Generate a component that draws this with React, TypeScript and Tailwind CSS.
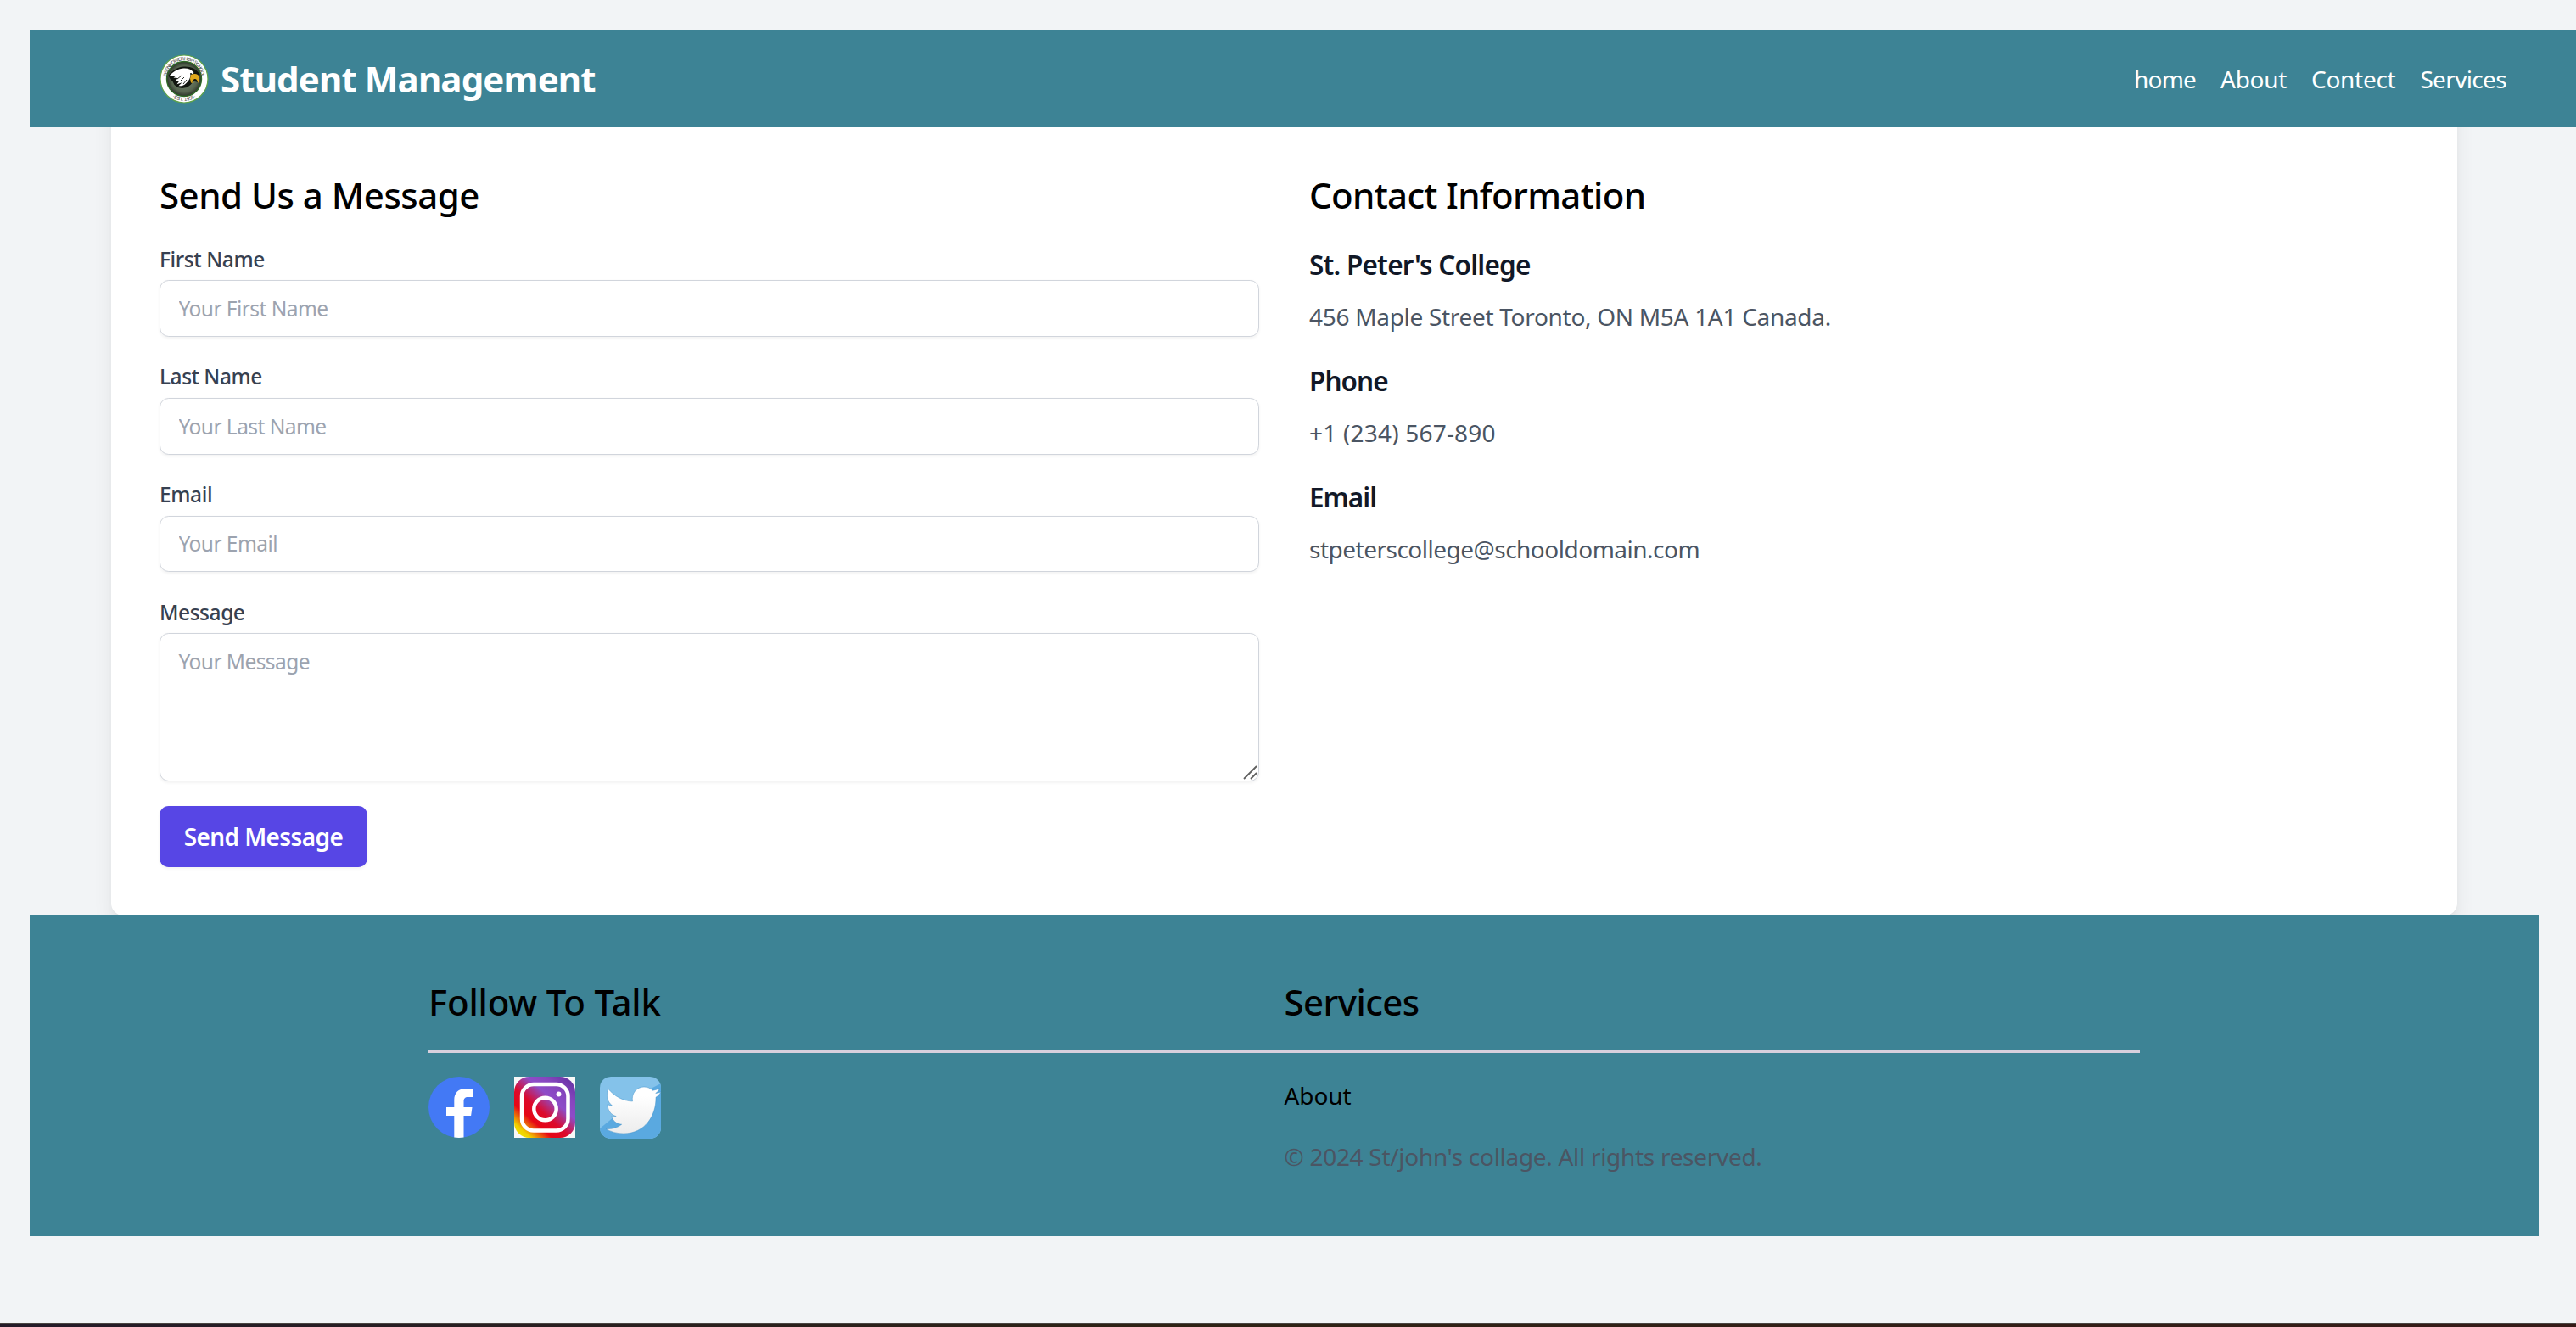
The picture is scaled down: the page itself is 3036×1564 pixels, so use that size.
const inputClass =
  "block h-[66.6px] w-full rounded-[10.8px] border border-gray-300 bg-white px-[21.5px] text-[24.5px] tracking-[-0.55px] text-gray-700 shadow-[0_1.8px_3.6px_rgba(0,0,0,0.05)] outline-none placeholder:text-[#9ca3af]";
const labelClass = "mb-[6.5px] block pt-[0.5px] text-[24.5px] leading-[36px] font-medium text-[#374151]";
const infoHeadingClass = "mb-[14px] text-[31.5px] leading-[50px] font-semibold text-[#111827]";

function EagleLogo() {
  return (
    <svg className="size-[58px] shrink-0" viewBox="0 0 58 58">
      <defs>
        <radialGradient id="crest">
          <stop offset="0.3" stopColor="#6f7f6a" />
          <stop offset="0.75" stopColor="#56654f" />
          <stop offset="1" stopColor="#2c332a" />
        </radialGradient>
        <path id="arcTop" d="M8.6 29a20.4 20.4 0 0 1 40.8 0" />
        <path id="arcBottom" d="M4.6 29a24.4 24.4 0 0 0 48.8 0" />
      </defs>
      <circle cx="29" cy="29" r="28" fill="#fff" stroke="#5fa348" strokeWidth="1.2" />
      <circle cx="29" cy="29" r="20.500" fill="url(#crest)" stroke="#2f6a27" strokeWidth="1.4" />
      <text fontFamily="Liberation Sans" fontSize="5.6" fill="#333" transform="translate(0 -1.6)">
        <textPath href="#arcTop" startOffset="50%" textAnchor="middle" textLength="62">EISENHOWER HIGH SCHOOL</textPath>
      </text>
      <text fontFamily="Liberation Sans" fontSize="5.6" fill="#333" transform="translate(0 1.6)">
        <textPath href="#arcBottom" startOffset="50%" textAnchor="middle">·EST. 1959·</textPath>
      </text>
      <path
        d="M10.500 25c4-6 11-10 18-10.500 8-.6 15 2.500 19 9L45 33l-4.500-1.500-4 4.500-4 3-6 1-5-1-4-3-2-4-3-3Z"
        fill="#11150f"
      />
      <path
        d="M11.500 25.500c5-6 11-8.500 17-9 5-.3 9.500 1.500 12 5.500l-4 2c0 4-2 7-5 10-3 3-6 3.500-9 3.300l4-4-6 2 3-4.300-5 1 3-4-5-.5 3-2.300Z"
        fill="#fff"
      />
      <path d="m21 29 5-4M24 32l5-5M28 35l4-5" stroke="#11150f" strokeWidth="0.900" />
      <path d="M37 24c4-2 9-1.500 10 3 .5 3-.6 5-2 7 0-3-1-5-4-5l-3 3 3 2-4-.5-1-5Z" fill="#e0a81c" />
      <circle cx="37" cy="23" r="1" fill="#11150f" />
    </svg>
  );
}

function Facebook() {
  return (
    <svg className="size-[72px]" viewBox="0 0 72 72">
      <circle cx="36" cy="36" r="36" fill="#4379f5" />
      <path
        d="M30.300 71.500V46H21V36h9.300v-8.500C30.300 19 35.500 14 43.500 14c3 0 6 .2 8.500.4V24h-5.500c-3.500 0-5 2-5 5v7h10l-1.400 10h-8.600v25.500a36 36 0 0 1-11.200 0Z"
        fill="#fff"
      />
    </svg>
  );
}

function Instagram() {
  return (
    <svg className="size-[72px]" viewBox="0 0 72 72">
      <defs>
        <linearGradient id="insta" x1="0.07" y1="0.95" x2="0.87" y2="0.04">
          <stop offset="0" stopColor="#f0e000" />
          <stop offset="0.08" stopColor="#f0d000" />
          <stop offset="0.27" stopColor="#e60614" />
          <stop offset="0.44" stopColor="#dc0a2c" />
          <stop offset="0.66" stopColor="#8e4cc8" />
          <stop offset="0.82" stopColor="#8646be" />
          <stop offset="1" stopColor="#6c36a8" />
        </linearGradient>
      </defs>
      <path fill="#f8f8f8" d="M0 0h72v72H0z" />
      <rect width="72" height="72" rx="18" fill="url(#insta)" />
      <rect x="9" y="9" width="54.500" height="54.500" rx="14" fill="none" stroke="#fff" strokeWidth="4.500" />
      <circle cx="36.500" cy="38" r="13.200" fill="none" stroke="#fff" strokeWidth="4.500" />
      <circle cx="52.500" cy="20.500" r="2.900" fill="#fff" />
    </svg>
  );
}

function Twitter() {
  return (
    <svg className="h-[73px] w-[72px]" viewBox="0 0 72 73">
      <defs>
        <clipPath id="tile">
          <rect width="72" height="73" rx="13" />
        </clipPath>
        <linearGradient id="bird" x1="0" y1="0" x2="0" y2="1">
          <stop offset="0.2" stopColor="#fff" />
          <stop offset="1" stopColor="#ececec" />
        </linearGradient>
      </defs>
      <g clipPath="url(#tile)">
        <path fill="#84c2ea" d="M0 0h72v73H0z" />
        <path fill="#5aa9e0" d="M72 8 54 17 0 61v12h72Z" />
        <path
          d="M10 14.500C17 23 27 28.500 38.500 29 37 20 43 12 52 12c4.500 0 7.500 1.600 10.500 4.300 3-.5 5.500-1.500 8-2.800-.8 2.500-2.500 4.500-4.800 6 2.200-.2 4.300-.8 6.300-1.600-1.500 2.600-3.500 4.700-6 6.300C66.500 46 53 67 28 67c-8 0-15-2-21-5.600 7 .6 13.500-1.200 18.700-5.200-6-.4-10.200-4-12-9.600h5.500C13 45 9.300 40 9 32.500c1.700 1 3.500 1.500 5.500 1.600C8.500 29.500 7 21.500 10 14.500Z"
          fill="url(#bird)"
          stroke="#3f8fc8"
          strokeOpacity="0.500"
          strokeWidth="0.900"
        />
      </g>
    </svg>
  );
}

function Header() {
  return (
    <header className="relative z-10 ml-[35px] flex h-[115px] items-center justify-between bg-[#3d8395] pr-[82px] pl-[153px] text-white">
      <div className="flex items-center">
        <EagleLogo />
        <span className="ml-[14px] text-[42px] font-bold tracking-[-0.86px]">Student Management</span>
      </div>
      <nav className="flex gap-[29px] text-[28px]">
        <a className="tracking-[-0.8px]">home</a>
        <a className="tracking-[-0.3px]">About</a>
        <a className="tracking-[-0.3px]">Contect</a>
        <a className="tracking-[-0.65px]">Services</a>
      </nav>
    </header>
  );
}

function MessageForm() {
  return (
    <section>
      <h2 className="mb-[28.4px] text-[42px] leading-[58px] font-medium tracking-[-0.5px] text-black">Send Us a Message</h2>
      <form className="flex flex-col gap-[29px]">
        <div>
          <label className={`${labelClass} tracking-[-0.4px]`}>First Name</label>
          <input className={inputClass} placeholder="Your First Name" />
        </div>
        <div>
          <label className={`${labelClass} tracking-[-0.48px]`}>Last Name</label>
          <input className={inputClass} placeholder="Your Last Name" />
        </div>
        <div>
          <label className={`${labelClass} tracking-[-0.4px]`}>Email</label>
          <input className={inputClass} placeholder="Your Email" />
        </div>
        <div className="relative">
          <label className={`${labelClass} tracking-[-0.45px]`}>Message</label>
          <textarea
            className="block h-[175px] w-full resize-none rounded-[10.8px] border border-gray-300 bg-white px-[21.5px] py-[14.500px] text-[24.5px] leading-[36px] tracking-[-0.57px] text-gray-700 shadow-[0_1.8px_3.6px_rgba(0,0,0,0.05)] outline-none placeholder:text-[#9ca3af]"
            placeholder="Your Message"
          />
          <svg className="absolute right-[2px] bottom-[2px] size-[17px]" viewBox="0 0 17 17">
            <path d="M1 16 16 1M9 16l7-7" stroke="#606060" strokeWidth="1.800" />
          </svg>
        </div>
        <button
          type="button"
          className="h-[72px] w-[245px] rounded-[10.8px] bg-[#5746e5] text-[28px] font-semibold tracking-[-0.6px] whitespace-nowrap text-white shadow-[0_1.8px_3.6px_rgba(0,0,0,0.05)]"
        >
          Send Message
        </button>
      </form>
    </section>
  );
}

function ContactInfo() {
  return (
    <section>
      <h2 className="mb-[28.4px] text-[42px] leading-[58px] font-medium tracking-[-0.68px] text-black">Contact Information</h2>
      <div className="flex flex-col gap-[28.8px] text-[28px] leading-[44px] text-[#4b5563]">
        <div>
          <h3 className={`${infoHeadingClass} tracking-[-0.78px]`}>St. Peter's College</h3>
          <p className="tracking-[-0.3px]">456 Maple Street Toronto, ON M5A 1A1 Canada.</p>
        </div>
        <div>
          <h3 className={`${infoHeadingClass} tracking-[-0.95px]`}>Phone</h3>
          <p className="tracking-[0.2px]">+1 (234) 567-890</p>
        </div>
        <div>
          <h3 className={`${infoHeadingClass} tracking-[-1px]`}>Email</h3>
          <p className="tracking-[-0.5px]">stpeterscollege@schooldomain.com</p>
        </div>
      </div>
    </section>
  );
}

function Footer() {
  return (
    <footer className="relative z-10 mr-[44px] ml-[35px] h-[378px] bg-[#3d8395] pt-[72px]">
      <div className="mx-auto w-[2017px] text-black">
        <div className="grid grid-cols-2 border-b-[3px] border-[#d8d0dd] pt-px pb-[28px] text-[42px] leading-[58px] font-medium">
          <h2 className="tracking-[-0.2px]">Follow To Talk</h2>
          <h2 className="tracking-[-0.55px]">Services</h2>
        </div>
        <div className="mt-[28px] grid grid-cols-2">
          <div className="flex gap-[29px]">
            <Facebook />
            <Instagram />
            <Twitter />
          </div>
          <div className="text-[28px] leading-[44px]">
            <p className="mb-[28px] tracking-[-0.1px]">About</p>
            <p className="tracking-[-0.3px] text-[#4b5563]">© 2024 St/john's collage. All rights reserved.</p>
          </div>
        </div>
      </div>
    </footer>
  );
}

export default function App() {
  return (
    <div className="h-[1564px] w-[3036px] overflow-hidden bg-[#f2f4f6] pt-[35px] font-['Noto_Sans',sans-serif]">
      <Header />
      <main className="mt-[-86px] ml-[131px] grid w-[2765px] grid-cols-2 gap-[59px] rounded-[14.4px] bg-white px-[57px] pt-[137px] pb-[57px] shadow-[0_18px_27px_-5.4px_rgba(0,0,0,0.1),0_7.2px_10.8px_-7.2px_rgba(0,0,0,0.1)]">
        <MessageForm />
        <ContactInfo />
      </main>
      <Footer />
      <div className="mt-[102px] h-[5px] border-t-2 border-[#4a4542] bg-linear-to-r from-[#241a28] via-[#2e2214] via-45% to-[#361a17]" />
    </div>
  );
}
